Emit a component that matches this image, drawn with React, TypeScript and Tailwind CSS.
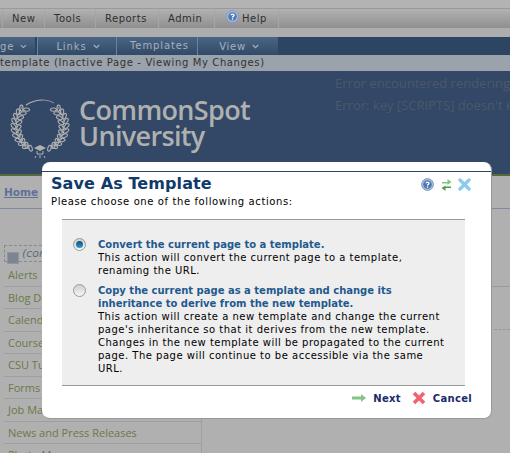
const verdana = "font-['DejaVu_Sans',sans-serif]";

const sideItems = ["Alerts", "Blog Display", "Calendar", "Courses", "CSU Tutorials", "Forms", "Job Manager", "News and Press Releases", "Photo Manager"];

const leafAngles = [42, 54, 66, 78, 90, 102, 114, 126, 138, 150];

const Wreath = () => (
  <svg width="62" height="62" viewBox="0 0 62 62" className="shrink-0">
    <path d="M16 9 Q 24 4 33 4" stroke="#b0b0b0" strokeWidth="1.2" fill="none" />
    <path d="M33 4 Q 39 4 44 7" stroke="#8b8f95" strokeWidth="1" fill="none" />
    <path d="M12 11 Q -2 30 19 53 M48 11 Q 62 30 41 53" stroke="#b0b0b0" strokeWidth="0.7" fill="none" />
    {leafAngles.map((a) => {
      const r = (a * Math.PI) / 180;
      const x = 30 + 24 * Math.sin(r);
      const y = 30 - 24 * Math.cos(r);
      return (
        <g key={a}>
          <ellipse cx={x + 2.6} cy={y} rx="3" ry="1.6" transform={`rotate(${a - 135} ${x + 2.6} ${y})`} fill="none" stroke="#b0b0b0" strokeWidth="1.1" />
          <ellipse cx={x - 2.6} cy={y + 1.5} rx="3" ry="1.6" transform={`rotate(${a - 45} ${x - 2.6} ${y + 1.5})`} fill="none" stroke="#b0b0b0" strokeWidth="1.1" />
          <ellipse cx={60 - x - 2.6} cy={y} rx="3" ry="1.6" transform={`rotate(${135 - a} ${60 - x - 2.6} ${y})`} fill="none" stroke="#b0b0b0" strokeWidth="1.1" />
          <ellipse cx={60 - x + 2.6} cy={y + 1.5} rx="3" ry="1.6" transform={`rotate(${45 - a} ${60 - x + 2.6} ${y + 1.5})`} fill="none" stroke="#b0b0b0" strokeWidth="1.1" />
        </g>
      );
    })}
    <path d="M24 52 L30 49 L36 52 L30 55 Z" fill="#b0b0b0" />
    <path d="M27 55 V58 H33 V55 M30 59 V62 M26 60 L25 62 M34 60 L35 62" stroke="#b0b0b0" strokeWidth="1" fill="none" />
  </svg>
);

const HelpIcon = ({ size }: { size: number }) => (
  <svg width={size} height={size} viewBox="0 0 14 14">
    <circle cx="7" cy="7" r="6.4" fill="#a9bde2" stroke="#7d98c8" />
    <circle cx="7" cy="7" r="4.6" fill="#4d78b0" />
    <path d="M5.4 5.7 C5.4 3.9 8.7 3.9 8.7 5.7 C8.7 6.9 7 6.8 7 8.2" stroke="#fff" strokeWidth="1.4" fill="none" />
    <rect x="6.3" y="9" width="1.4" height="1.5" fill="#fff" />
  </svg>
);

const Chevron = () => (
  <svg width="7" height="5" viewBox="0 0 7 5" className="ml-1.5 mt-px">
    <path d="M0.8 1 L3.5 3.6 L6.2 1" stroke="currentColor" strokeWidth="1.2" fill="none" />
  </svg>
);

const ModalRadio = ({ on }: { on?: boolean }) => (
  <div className="flex h-[13px] w-[13px] shrink-0 items-center justify-center rounded-full border border-[#9a9a9a] bg-gradient-to-b from-[#cfcfcf] to-[#f7f7f7]">
    {on && <div className="h-[7px] w-[7px] rounded-full bg-gradient-to-b from-[#0e4f78] to-[#2a9ccf]" />}
  </div>
);

const App = () => {
  return (
    <div className={`relative h-[453px] w-[510px] overflow-hidden bg-[#b0b0b0] ${verdana}`}>
      <div className="h-[9px] border-b border-[#9a9a9a] bg-[#b3b3b3]" />
      <div className="flex h-[19px] bg-gradient-to-b from-[#b2b2b2] to-[#8f8f8f] pl-[2px] text-[10px] leading-[19px] tracking-[0.5px] text-[#2f2f2f]">
        <div className="w-[43px] border-x border-[#a5a5a5] pl-[9px]">New</div>
        <div className="w-[51px] border-r border-[#a5a5a5] pl-[9px]">Tools</div>
        <div className="w-[63px] border-r border-[#a5a5a5] pl-[9px]">Reports</div>
        <div className="w-[56px] border-r border-[#a5a5a5] pl-[9px]">Admin</div>
        <div className="flex w-[64px] items-center border-r border-[#a5a5a5] pl-[11px]">
          <div className="-mt-1 mr-[3px]">
            <HelpIcon size={13} />
          </div>
          Help
        </div>
      </div>
      <div className="h-[9px] bg-[#adadad]" />
      <div className="flex h-[18px] bg-[#2c4562] text-[10px] leading-[17px] tracking-[0.9px] text-[#a9b0b8]">
        <div className="flex w-[36px] items-center justify-end overflow-hidden border-r border-[#2c4562] bg-gradient-to-b from-[#4b6684] to-[#304a68] pr-2">
          ge
          <Chevron />
        </div>
        <div className="ml-px flex w-[80px] items-center justify-center border-x border-[#6d8199] bg-gradient-to-b from-[#4b6684] to-[#304a68] pl-[2px]">
          Links
          <Chevron />
        </div>
        <div className="w-[81px] border-r border-[#6d8199] bg-gradient-to-b from-[#4b6684] to-[#304a68] pl-[5px] text-center">Templates</div>
        <div className="flex w-[80px] items-center justify-center bg-gradient-to-b from-[#4b6684] to-[#304a68] tracking-[0.7px] pl-[2px]">
          View
          <Chevron />
        </div>
      </div>
      <div className="h-[16px] whitespace-nowrap bg-[#9aa2ab] pl-0 text-[10px] leading-[15px] tracking-[0.62px] text-[#333]">
        template (Inactive Page - Viewing My Changes)
      </div>

      {/* site header */}
      <div className="relative flex h-[105px] border-b-[2px] border-[#55693e] bg-[#324866]">
        <div className="ml-[10px] mt-[25px]">
          <Wreath />
        </div>
        <div className="ml-[7px] mt-[26px] font-['Open_Sans',sans-serif] text-[27px] font-semibold leading-[26px] tracking-[-0.65px] text-[#b0b0b0]">
          <div>CommonSpot</div>
          <div>University</div>
        </div>
        <div className="ml-[85px] mt-[1px] whitespace-nowrap font-['Open_Sans',sans-serif] text-[13px] leading-[22px] text-[#4a586a]">
          <div>Error encountered rendering element</div>
          <div>Error: key [SCRIPTS] doesn't exist</div>
        </div>
      </div>

      {/* page behind the dialog */}
      <div className="flex h-[33px] items-start border-b border-[#7f8a9c] pl-[4px] pt-[8px]">
        <span className="font-['DejaVu_Sans',sans-serif] text-[10.5px] font-bold leading-[17px] text-[#5f7296] underline">Home</span>
      </div>
      <div className="flex">
        <div className="w-[202px] border-r border-[#9f9f9f] pl-[4px] pr-0 pt-[36px]">
          <div className="flex h-[17px] items-start border border-dashed border-[#8a8a8a] text-[11px] italic leading-[15px] text-[#5a6f80]">
            <div className="relative mr-[3px] ml-[2px] mt-[6px] h-[12px] w-[12px] shrink-0 border border-[#8f959c] bg-[#7d8591]" />
            (con
          </div>
          <div className="h-[2px]" />
          {sideItems.map((item) => (
            <div
              key={item}
              className="h-[22.5px] whitespace-nowrap border-b border-[#9f9f9f] pl-[4px] font-['Open_Sans',sans-serif] text-[11px] leading-[21px] text-[#6a7a48]"
            >
              {item}
            </div>
          ))}
        </div>
        <div className="flex-1">
          <div className="mt-[77px] h-[43px] border-t border-[#9a9a9a]" />
          <div className="ml-[292px] border-t border-dashed border-[#999]" />
        </div>
      </div>

      {/* dialog */}
      <div className="absolute left-[42px] top-[162px] flex h-[257px] w-[450px] flex-col rounded-[8px] border-b border-r border-[#999] bg-white pt-[9px]">
        <div className="border-t border-[#2c4562]" />
        <div className="flex justify-between pl-[9px] pr-[20px] pt-[1px]">
          <div className="text-[16px] font-bold leading-[22px] tracking-[0.1px] text-[#0f3a6b]">Save As Template</div>
          <div className="flex items-center pt-[1px]">
            <HelpIcon size={13} />
            <svg width="11" height="14" viewBox="0 0 11 14" className="ml-[7px] mr-[6px]">
              <path d="M1 4 H6.5 V1 L10.5 4 L6.5 7 V5.5 H1 Z" fill="#7fc77f" />
              <path d="M10 10 H4.5 V13 L0.5 10 L4.5 7.5 V8.5 H10 Z" fill="#4f9e4f" />
            </svg>
            <svg width="13" height="13" viewBox="0 0 13 13">
              <path d="M2 2 L11 11 M11 2 L2 11" stroke="#8ccbec" strokeWidth="3.4" strokeLinecap="round" />
            </svg>
          </div>
        </div>
        <div className="pl-[9px] text-[10px] leading-[13px] tracking-[0.6px] text-black">Please choose one of the following actions:</div>
        <div className="ml-[20px] mt-[11px] h-[167px] w-[403px] border-y border-[#999] bg-[#eeeeee] pl-[11px] pr-[17px] pt-[18px] text-[10px] leading-[13px] tracking-[0.5px] text-black">
          <div className="flex">
            <ModalRadio on />
            <div className="ml-[12px]">
              <div className="font-bold tracking-[0px] text-[#1f5a8f]">Convert the current page to a template.</div>
              <div>This action will convert the current page to a template, renaming the URL.</div>
            </div>
          </div>
          <div className="mt-[7px] flex">
            <ModalRadio />
            <div className="ml-[12px]">
              <div className="font-bold tracking-[0px] text-[#1f5a8f]">
                Copy the current page as a template and change its inheritance to derive from the new template.
              </div>
              <div>
                This action will create a new template and change the current page's inheritance so that it derives from the new template. Changes in the new template will be propagated to the current page. The page will continue to be accessible via the same URL.
              </div>
            </div>
          </div>
        </div>
        <div className="flex items-center justify-end pr-[19px] pt-[5px] text-[10px] font-bold leading-[13px] tracking-[0.3px] text-[#1b2a6b]">
          <svg width="14" height="8" viewBox="0 0 14 8" className="mr-[7px]">
            <path d="M0 2.5 H9 V0 L14 4 L9 8 V5.5 H0 Z" fill="#86c386" />
          </svg>
          <span>Next</span>
          <svg width="14" height="14" viewBox="0 0 14 14" className="ml-[11px] mr-[7px]">
            <path d="M2 2 L12 12 M12 2 L2 12" stroke="#f4626e" strokeWidth="3.6" />
          </svg>
          <span>Cancel</span>
        </div>
      </div>
    </div>
  );
};

export default App;
